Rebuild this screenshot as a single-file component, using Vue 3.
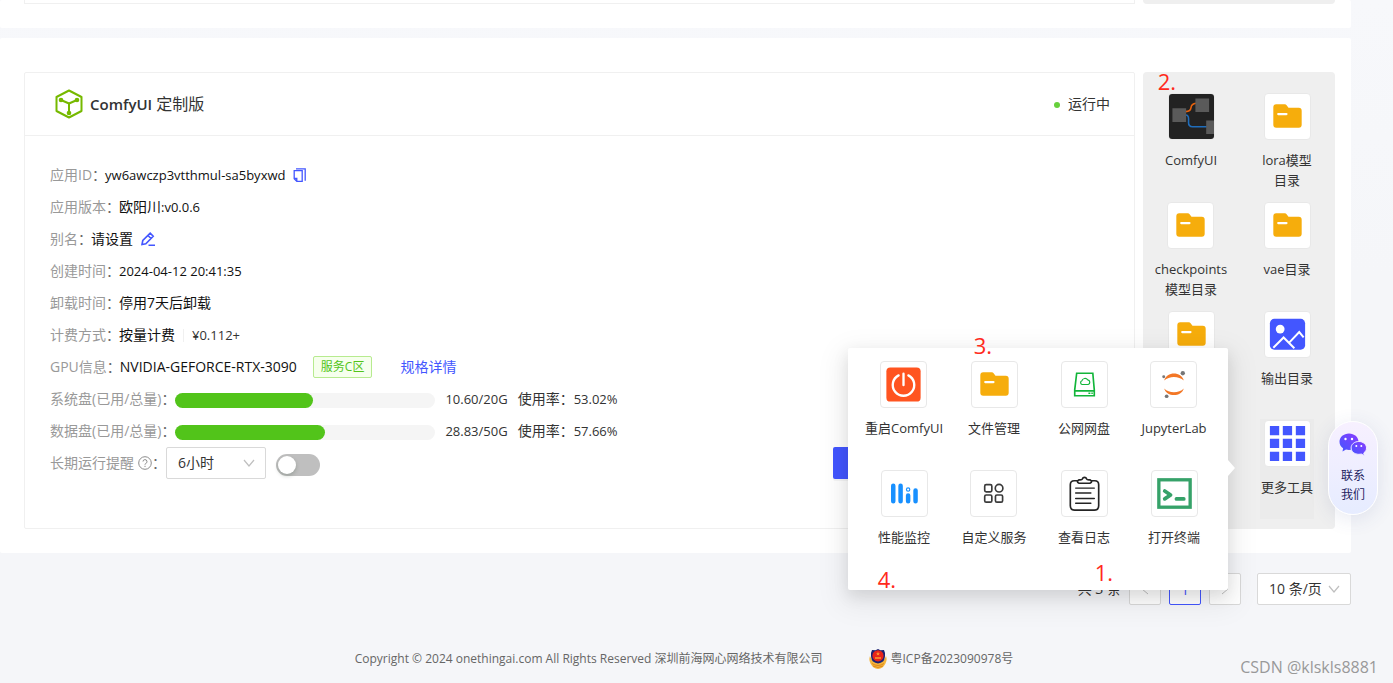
<script setup>
import { ref } from 'vue'

const disks = [
  { label: '系统盘(已用/总量)', used: '10.60/20G', rate: 53.02 },
  { label: '数据盘(已用/总量)', used: '28.83/50G', rate: 57.66 },
]
const shortcuts = [
  { name: 'ComfyUI', icon: 'nodes' },
  { name: 'lora模型\n目录', icon: 'folder' },
  { name: 'checkpoints\n模型目录', icon: 'folder' },
  { name: 'vae目录', icon: 'folder' },
  { name: '', icon: 'folder' },
  { name: '输出目录', icon: 'image' },
  { name: '', icon: '' },
  { name: '更多工具', icon: 'grid', active: true },
]
const tools = [
  { name: '重启ComfyUI', icon: 'power' },
  { name: '文件管理', icon: 'folder' },
  { name: '公网网盘', icon: 'drive' },
  { name: 'JupyterLab', icon: 'jupyter' },
  { name: '性能监控', icon: 'bars' },
  { name: '自定义服务', icon: 'apps' },
  { name: '查看日志', icon: 'log' },
  { name: '打开终端', icon: 'terminal' },
]
const remind = ref(false)
const hours = ref('6')
const pageSize = ref('10')
</script>

<template>
  <svg class="defs" aria-hidden="true">
    <symbol id="i-folder" viewBox="0 0 46 46">
      <path d="M8.500 13.500q0-3 3-3h8.500q1.500 0 2.300 1.200L24 14H34.500q3 0 3 3V31.500q0 3-3 3h-23q-3 0-3-3z" fill="#f6ad0c" />
      <path d="M13.500 20.500h8.500" stroke="#fff" stroke-width="2.200" stroke-linecap="round" />
    </symbol>
    <symbol id="i-nodes" viewBox="0 0 46 46">
      <rect width="46" height="46" fill="#222" />
      <path d="M17 18q5 0 5.500-4t5-4.500" fill="none" stroke="#e8620c" stroke-width="1.600" />
      <path d="M17 21.500q3 0 3 4v4q0 4 4 4h15" fill="none" stroke="#1f6dbb" stroke-width="1.600" />
      <path d="M3.500 14.500h14v14h-14zM27 4.500h14v14h-14zM38 27h8v14h-8z" fill="#5a5a5a" />
    </symbol>
    <symbol id="i-image" viewBox="0 0 46 46">
      <rect x="5" y="7" width="36" height="31.500" rx="4.500" fill="#4356ff" />
      <circle cx="15.500" cy="17.500" r="4.500" fill="#fff" />
      <path d="M8.500 36.500L19 26 30 37M24.500 31.500L35 20.500l4.500 5.500" fill="none" stroke="#fff" stroke-width="2" />
    </symbol>
    <symbol id="i-grid" viewBox="0 0 46 46">
      <path d="M5 5h9.500v9.500H5zM18.200 5h9.500v9.500h-9.500zM31.500 5H41v9.500h-9.500zM5 18.200h9.500v9.500H5zM18.200 18.200h9.500v9.500h-9.500zM31.500 18.200H41v9.500h-9.500zM5 31.500h9.500V41H5zM18.200 31.500h9.500V41h-9.500zM31.500 31.500H41V41h-9.500z" fill="#4356ff" />
    </symbol>
    <symbol id="i-power" viewBox="0 0 46 46">
      <rect x="5.500" y="5.500" width="35" height="35" rx="4" fill="#ff5420" />
      <path d="M18 13.700a11 11 0 1 0 10 0M23 12v11.500" fill="none" stroke="#fff" stroke-width="2.400" stroke-linecap="round" />
    </symbol>
    <symbol id="i-drive" viewBox="0 0 46 46">
      <path d="M15 11.500h16.500L33 28.500v6H13v-6zM13 29.500h20" fill="none" stroke="#12b53a" stroke-width="1.700" />
      <path d="M20.500 23a2 2 0 0 1-.2-3.800 3.400 3.400 0 0 1 6-1 2.500 2.500 0 0 1 .5 4.800z" fill="none" stroke="#12b53a" stroke-width="1.200" />
      <path d="M27 32h2M30 32h1.500" stroke="#12b53a" stroke-width="1.500" />
    </symbol>
    <symbol id="i-jupyter" viewBox="0 0 46 46">
      <path d="M13.500 19C16 9.500 31 9.500 33.500 19 28.500 14 18.500 14 13.500 19zM13.500 27C18.500 32.200 28.500 32.200 33.500 27 31 36 16 36 13.500 27z" fill="#f37726" />
      <g fill="#767677"><circle cx="32.500" cy="11.500" r="2.200" /><circle cx="13" cy="15" r="1.500" /><circle cx="16" cy="35" r="1.900" /></g>
    </symbol>
    <symbol id="i-bars" viewBox="0 0 46 46">
      <g fill="none" stroke="#1890ff" stroke-width="4.600" stroke-linecap="round"><path d="M11.500 15v16M19 15v16M26.700 25v6M34.300 20v11" /></g>
      <circle cx="26.700" cy="19" r="1.700" fill="none" stroke="#1890ff" stroke-width="1.200" />
    </symbol>
    <symbol id="i-apps" viewBox="0 0 46 46">
      <g fill="none" stroke="#3a3a3a" stroke-width="1.700"><rect x="14" y="14" width="7.300" height="7.300" rx="1.500" /><circle cx="28.700" cy="17.600" r="3.900" /><rect x="14" y="24.500" width="7.300" height="7.300" rx="1.500" /><rect x="25" y="24.500" width="7.300" height="7.300" rx="1.500" /></g>
    </symbol>
    <symbol id="i-log" viewBox="0 0 46 46">
      <path d="M16 10h-3.500q-4 0-4 4v21.500q0 4.500 4.500 4.500h20q4.500 0 4.500-4.500V14q0-4-4-4H30M17.500 12.500h11q3.500-1.500 0-3.500-3 .3-3.300-.8a2.300 2.300 0 0 0-4.400 0q-.3 1.100-3.300.8-3.500 2 0 3.500z" fill="none" stroke="#242424" stroke-width="1.700" />
      <path d="M14 17.500h19M14 22.500h15.500M14 28h19M14 33h15.500" stroke="#242424" stroke-width="1.500" stroke-linecap="round" />
    </symbol>
    <symbol id="i-terminal" viewBox="0 0 46 46">
      <rect x="7" y="9" width="32" height="28" fill="#fff" stroke="#36a269" stroke-width="3.400" />
      <path d="M13 20.500l6 4-6 4" fill="none" stroke="#36a269" stroke-width="3.800" stroke-linecap="round" stroke-linejoin="round" />
      <path d="M25 28.500h7.500" stroke="#36a269" stroke-width="3.800" stroke-linecap="round" />
    </symbol>
    <symbol id="i-down" viewBox="0 0 12 12">
      <path d="M1 3l5 6 5-6" fill="none" stroke="#bfbfbf" stroke-width="1.200" />
    </symbol>
  </svg>

  <div class="page">
    <section class="card card-prev">
      <div class="prev-main"></div>
      <div class="prev-side"></div>
    </section>

    <section class="card card-app">
      <div class="app">
        <header class="app-head">
          <svg class="logo" viewBox="0 0 28 30">
            <g fill="none" stroke="#76b900" stroke-width="2" stroke-linejoin="round"><path d="M14 1.500L26.500 8v14L14 28.500 1.500 22V8z" /><path d="M6 11l8 3.500 8-3.500M14 14.500V24" /></g>
            <g fill="#76b900"><circle cx="6" cy="11" r="2.300" /><circle cx="22" cy="11" r="2.300" /><circle cx="14" cy="24" r="2.300" /></g>
          </svg>
          <h2><b>ComfyUI</b> 定制版</h2>
          <span class="status">运行中</span>
        </header>
        <div class="info">
          <div class="row"><span class="key">应用ID</span><span class="val num">yw6awczp3vtthmul-sa5byxwd</span>
            <button class="mini mini-copy" aria-label="复制"><svg viewBox="0 0 14 14"><path d="M3 .8h9.200v12M1.200 2.600h8v10.700H3.800L1.200 10.700zM1.200 10.400h2.600v2.900" fill="none" stroke="#4356ff" stroke-width="1.300" /></svg></button>
          </div>
          <div class="row"><span class="key">应用版本</span><span class="val">欧阳川<span class="num">:v0.0.6</span></span></div>
          <div class="row"><span class="key">别名</span><span class="val">请设置</span>
            <button class="mini" aria-label="编辑"><svg viewBox="0 0 14 14"><path d="M1 12.500l.8-4L9.200 1.200l3 3-7.400 7.500zM7 3.500l3 3M7.500 13.200H14" fill="none" stroke="#4356ff" stroke-width="1.600" /></svg></button>
          </div>
          <div class="row"><span class="key">创建时间</span><span class="val num">2024-04-12 20:41:35</span></div>
          <div class="row"><span class="key">卸载时间</span><span class="val">停用7天后卸载</span></div>
          <div class="row"><span class="key">计费方式</span><span class="val">按量计费</span><span class="price num">¥0.112+</span></div>
          <div class="row"><span class="key">GPU信息</span><span class="val">NVIDIA-GEFORCE-RTX-3090</span><span class="tag">服务C区</span><a class="spec" href="#">规格详情</a></div>
          <div v-for="d in disks" :key="d.label" class="row">
            <span class="key">{{ d.label }}</span>
            <div class="bar" role="progressbar" :aria-label="d.label" :aria-valuenow="d.rate"><i :style="{ width: d.rate + '%' }"></i></div>
            <span class="used num">{{ d.used }}</span><span class="used">使用率：<span class="num">{{ d.rate }}%</span></span>
          </div>
          <div class="row">
            <label class="key key-remind" for="remind-hours">长期运行提醒 <svg class="help" viewBox="0 0 14 14"><circle cx="7" cy="7" r="6.300" fill="none" stroke="#8c8c8c" /><path d="M5 5.500a2 2 0 1 1 2.600 2Q7 7.800 7 8.700M7 9.800v1.200" fill="none" stroke="#8c8c8c" /></svg></label>
            <span class="pick pick-hours">
              <select id="remind-hours" v-model="hours"><option value="6">6小时</option></select>
              <svg><use href="#i-down" /></svg>
            </span>
            <input v-model="remind" class="switch" type="checkbox" aria-label="长期运行提醒开关" />
            <button class="primary" aria-label="关机"></button>
          </div>
        </div>
      </div>

      <aside class="side">
        <template v-for="(s, n) in shortcuts" :key="n">
          <button v-if="s.icon" class="tile" :class="{ active: s.active }">
            <svg class="tile-icon"><use :href="'#i-' + s.icon" /></svg>
            <span>{{ s.name }}</span>
          </button>
          <i v-else></i>
        </template>
        <div class="popover">
          <button v-for="t in tools" :key="t.name" class="tile">
            <svg class="tile-icon"><use :href="'#i-' + t.icon" /></svg>
            <span>{{ t.name }}</span>
          </button>
        </div>
      </aside>
    </section>

    <nav class="pager">
      <span class="total">共 3 条</span>
      <button aria-label="上一页"><svg viewBox="0 0 12 12"><path d="M9 1L3 6l6 5" fill="none" stroke="#bfbfbf" /></svg></button>
      <button class="current">1</button>
      <button aria-label="下一页"><svg viewBox="0 0 12 12"><path d="M3 1l6 5-6 5" fill="none" stroke="#bfbfbf" /></svg></button>
      <span class="pick pick-size">
        <select v-model="pageSize" aria-label="每页条数"><option value="10">10 条/页</option></select>
        <svg><use href="#i-down" /></svg>
      </span>
    </nav>

    <footer class="foot">
      <span>Copyright © 2024 onethingai.com All Rights Reserved 深圳前海网心网络技术有限公司</span>
      <a href="#">
        <svg viewBox="0 0 18 20">
          <path d="M1 7q-1.500 4 .5 7.500Q4 19.500 9 20q5-.5 7.500-5.500Q18.500 11 17 7q-2 6-8 7-6-1-8-7z" fill="#f5b53c" />
          <path d="M3 14.500q6 4 12 0M4 17q5 3 10 0" fill="none" stroke="#e08a1c" />
          <path d="M9 0l2.500 1.200 3.500-.2 1 3q.3 6.500-2 8.500-2 1.700-5 2-3-.3-5-2Q1.700 10.500 2 4l1-3 3.500.2z" fill="#1c2372" />
          <circle cx="9" cy="6.800" r="5.600" fill="#e8241b" />
          <path d="M9 2.800l.6 1.400H11l-1.100.9.4 1.400L9 5.700l-1.300.8.400-1.400L7 4.200h1.400zM6 8.200h6v1.500H6z" fill="#ff9a2e" />
        </svg>
        粤ICP备2023090978号
      </a>
    </footer>

    <button class="contact">
      <svg viewBox="0 0 28 24">
        <defs><linearGradient id="chat" x1="0" y1="1" x2="1" y2="0"><stop offset="0" stop-color="#4356ff" /><stop offset="1" stop-color="#8a3cff" /></linearGradient></defs>
        <path d="M10 .5c5.300 0 9.500 3.600 9.500 8.200s-4.200 8.200-9.500 8.200q-1.500 0-3-.4L3.500 18.500l.6-3.200C1.800 13.800.5 11.500.5 8.700.5 4.100 4.700.5 10 .5z" fill="url(#chat)" />
        <path d="M19.800 8.500c4.400 0 7.700 2.900 7.700 6.400 0 2.200-1 3.800-2.700 5l.5 2.800-3-1.700q-1.200.3-2.500.3c-4.400 0-7.700-2.900-7.700-6.400s3.300-6.400 7.700-6.400z" fill="url(#chat)" stroke="#f5f0ff" />
        <g fill="#fff"><circle cx="6.500" cy="6" r="1.200" /><circle cx="13" cy="6" r="1.200" /><circle cx="17.300" cy="13" r="1" /><circle cx="22.300" cy="13" r="1" /></g>
      </svg>
      <span>联系<br />我们</span>
    </button>

    <span class="mark mark-1">1.</span>
    <span class="mark mark-2">2.</span>
    <span class="mark mark-3">3.</span>
    <span class="mark mark-4">4.</span>
    <span class="watermark">CSDN @klskls8881</span>
  </div>
</template>

<style>
body { background: #f5f6f9; }
</style>

<style scoped>
.page {
  position: relative;
  min-height: 100vh;
  overflow: hidden;
  background: linear-gradient(#f7f8fb, #f5f6f9 40%);
  color: #333;
  font: 14px/32px "Open Sans", "Noto Sans CJK SC", sans-serif;
}
.defs { position: absolute; width: 0; height: 0; }
button, select, input { box-sizing: border-box; margin: 0; padding: 0; border: 0; background: none; color: inherit; font: inherit; }
a { text-decoration: none; color: inherit; }
.num { font-size: 13px; }
.card { display: flex; gap: 8px; margin-right: 42px; box-sizing: border-box; background: #fff; border-radius: 2px; }
.card-prev { height: 28px; margin-bottom: 10px; padding: 0 16px 24px 24px; }
.prev-main { flex: 1; border: 1px solid #f0f0f0; border-top: 0; }
.prev-side { width: 192px; background: #efefef; border-radius: 0 0 4px 4px; }
.card-app { padding: 34px 16px 24px 24px; }
.app { flex: 1; min-width: 0; border: 1px solid #f0f0f0; border-radius: 2px; }
.app-head { display: flex; align-items: center; height: 62px; padding: 0 24px 0 30px; border-bottom: 1px solid #f0f0f0; }
.logo { width: 28px; height: 30px; }
h2 { flex: 1; margin: 0 0 0 7px; font-size: 16px; font-weight: 400; }
h2 b { font-size: 15px; font-weight: 600; }
.status::before { content: ""; display: inline-block; width: 6px; height: 6px; margin-right: 8px; border-radius: 50%; background: #67d03c; vertical-align: 1px; }
.info { padding: 23px 25px 49px; }
.row { display: flex; align-items: center; height: 32px; white-space: nowrap; }
.key { color: #999; }
.key::after { content: "："; color: #666; }
.val { margin-left: -1px; color: #111; }
.mini { display: flex; margin-left: 8px; }
.mini svg { width: 14px; height: 14px; }
.price { margin-left: 8px; padding-left: 8px; border-left: 1px solid #f0f0f0; line-height: 13px; }
.tag { margin-left: 16px; padding: 0 7px; border: 1px solid #b7eb8f; border-radius: 2px; background: #f6ffed; color: #52c41a; font-size: 12px; line-height: 20px; }
.spec { margin-left: 28px; color: #4356ff; }
.bar { width: 260px; height: 15px; margin-top: 2px; border-radius: 8px; background: #f5f5f5; }
.bar i { display: block; height: 100%; border-radius: 8px; background: #52c41a; }
.used { margin-left: 10px; }
.key-remind { display: flex; align-items: center; }
.help { width: 14px; height: 14px; margin-left: 4px; }
.pick { position: relative; display: inline-block; height: 32px; }
.pick select { width: 100%; height: 32px; padding: 0 11px; appearance: none; border: 1px solid #d9d9d9; border-radius: 2px; background: #fff; line-height: 30px; }
.pick svg { position: absolute; top: 10px; right: 11px; width: 12px; height: 12px; pointer-events: none; }
.pick-hours { width: 100px; }
.pick-size { width: 94px; margin-left: 8px; }
.switch { position: relative; width: 44px; height: 22px; margin: 4px 0 0 10px; appearance: none; border-radius: 11px; background: #bfbfbf; }
.switch::before { content: ""; position: absolute; top: 2px; left: 2px; width: 18px; height: 18px; border-radius: 50%; background: #fff; box-shadow: 0 2px 4px rgba(0, 35, 11, .2); }
.switch:checked { background: #4356ff; }
.switch:checked::before { left: 24px; }
.primary { width: 276px; height: 32px; margin-left: auto; border-radius: 2px; background: #4356ff; box-shadow: 0 2px 0 rgba(0, 0, 0, .04); }
.side { position: relative; display: grid; grid-template-columns: 1fr 1fr; grid-auto-rows: 109px; box-sizing: border-box; width: 192px; padding-top: 20px; border-radius: 4px; background: #efefef; }
.tile { display: flex; flex-direction: column; align-items: center; justify-self: center; height: 100px; min-width: 54px; padding-top: 1px; font-size: 13px; line-height: 20px; white-space: pre-line; }
.tile-icon { box-sizing: border-box; width: 47px; height: 47px; margin-bottom: 10px; border: 1px solid #e8e8e8; border-radius: 4px; background: #fff; }
.tile.active { background: #ebebeb; }
.popover { position: absolute; top: 276px; right: 107px; display: grid; grid-template-columns: repeat(4, 90px); grid-auto-rows: 109px; height: 230px; padding: 12px 9px 0 11px; border-radius: 2px; background: #fff; box-shadow: 0 6px 16px rgba(0, 0, 0, .1), 0 9px 28px 8px rgba(0, 0, 0, .06); }
.popover::after { content: ""; position: absolute; top: 112px; right: -7px; border: 8px solid transparent; border-right: 0; border-left: 7px solid #fff; }
.pager { display: flex; justify-content: flex-end; gap: 8px; margin: 20px 42px 0 0; }
.pager button { width: 32px; height: 32px; border: 1px solid #d9d9d9; border-radius: 2px; background: #fff; }
.pager button svg { width: 12px; height: 12px; }
.pager .current { border-color: #4356ff; color: #4356ff; }
.foot { display: flex; justify-content: center; gap: 46px; margin: 38px 42px 0 0; padding-left: 17px; color: #666; font-size: 12px; }
.foot a { display: flex; align-items: center; gap: 4px; }
.foot svg { width: 18px; height: 20px; }
.contact { position: absolute; top: 421px; right: 15px; display: flex; flex-direction: column; align-items: center; width: 50px; height: 94px; padding-top: 11px; border: 1px solid #fff; border-radius: 25px; background: linear-gradient(#f7f0ff, #e6ecff); box-shadow: 0 4px 20px rgba(60, 70, 140, .12); color: #23235f; font-size: 12px; line-height: 19px; }
.contact svg { width: 28px; height: 24px; margin-bottom: 9px; }
.mark { position: absolute; color: #ff2a1c; font-size: 22px; line-height: 24px; }
.mark-1 { top: 560px; right: 280px; }
.mark-2 { top: 69px; right: 217px; }
.mark-3 { top: 333px; right: 401px; }
.mark-4 { top: 567px; right: 497px; }
.watermark { position: absolute; top: 657px; right: 15px; color: #999; font-size: 16px; line-height: 20px; }
</style>
